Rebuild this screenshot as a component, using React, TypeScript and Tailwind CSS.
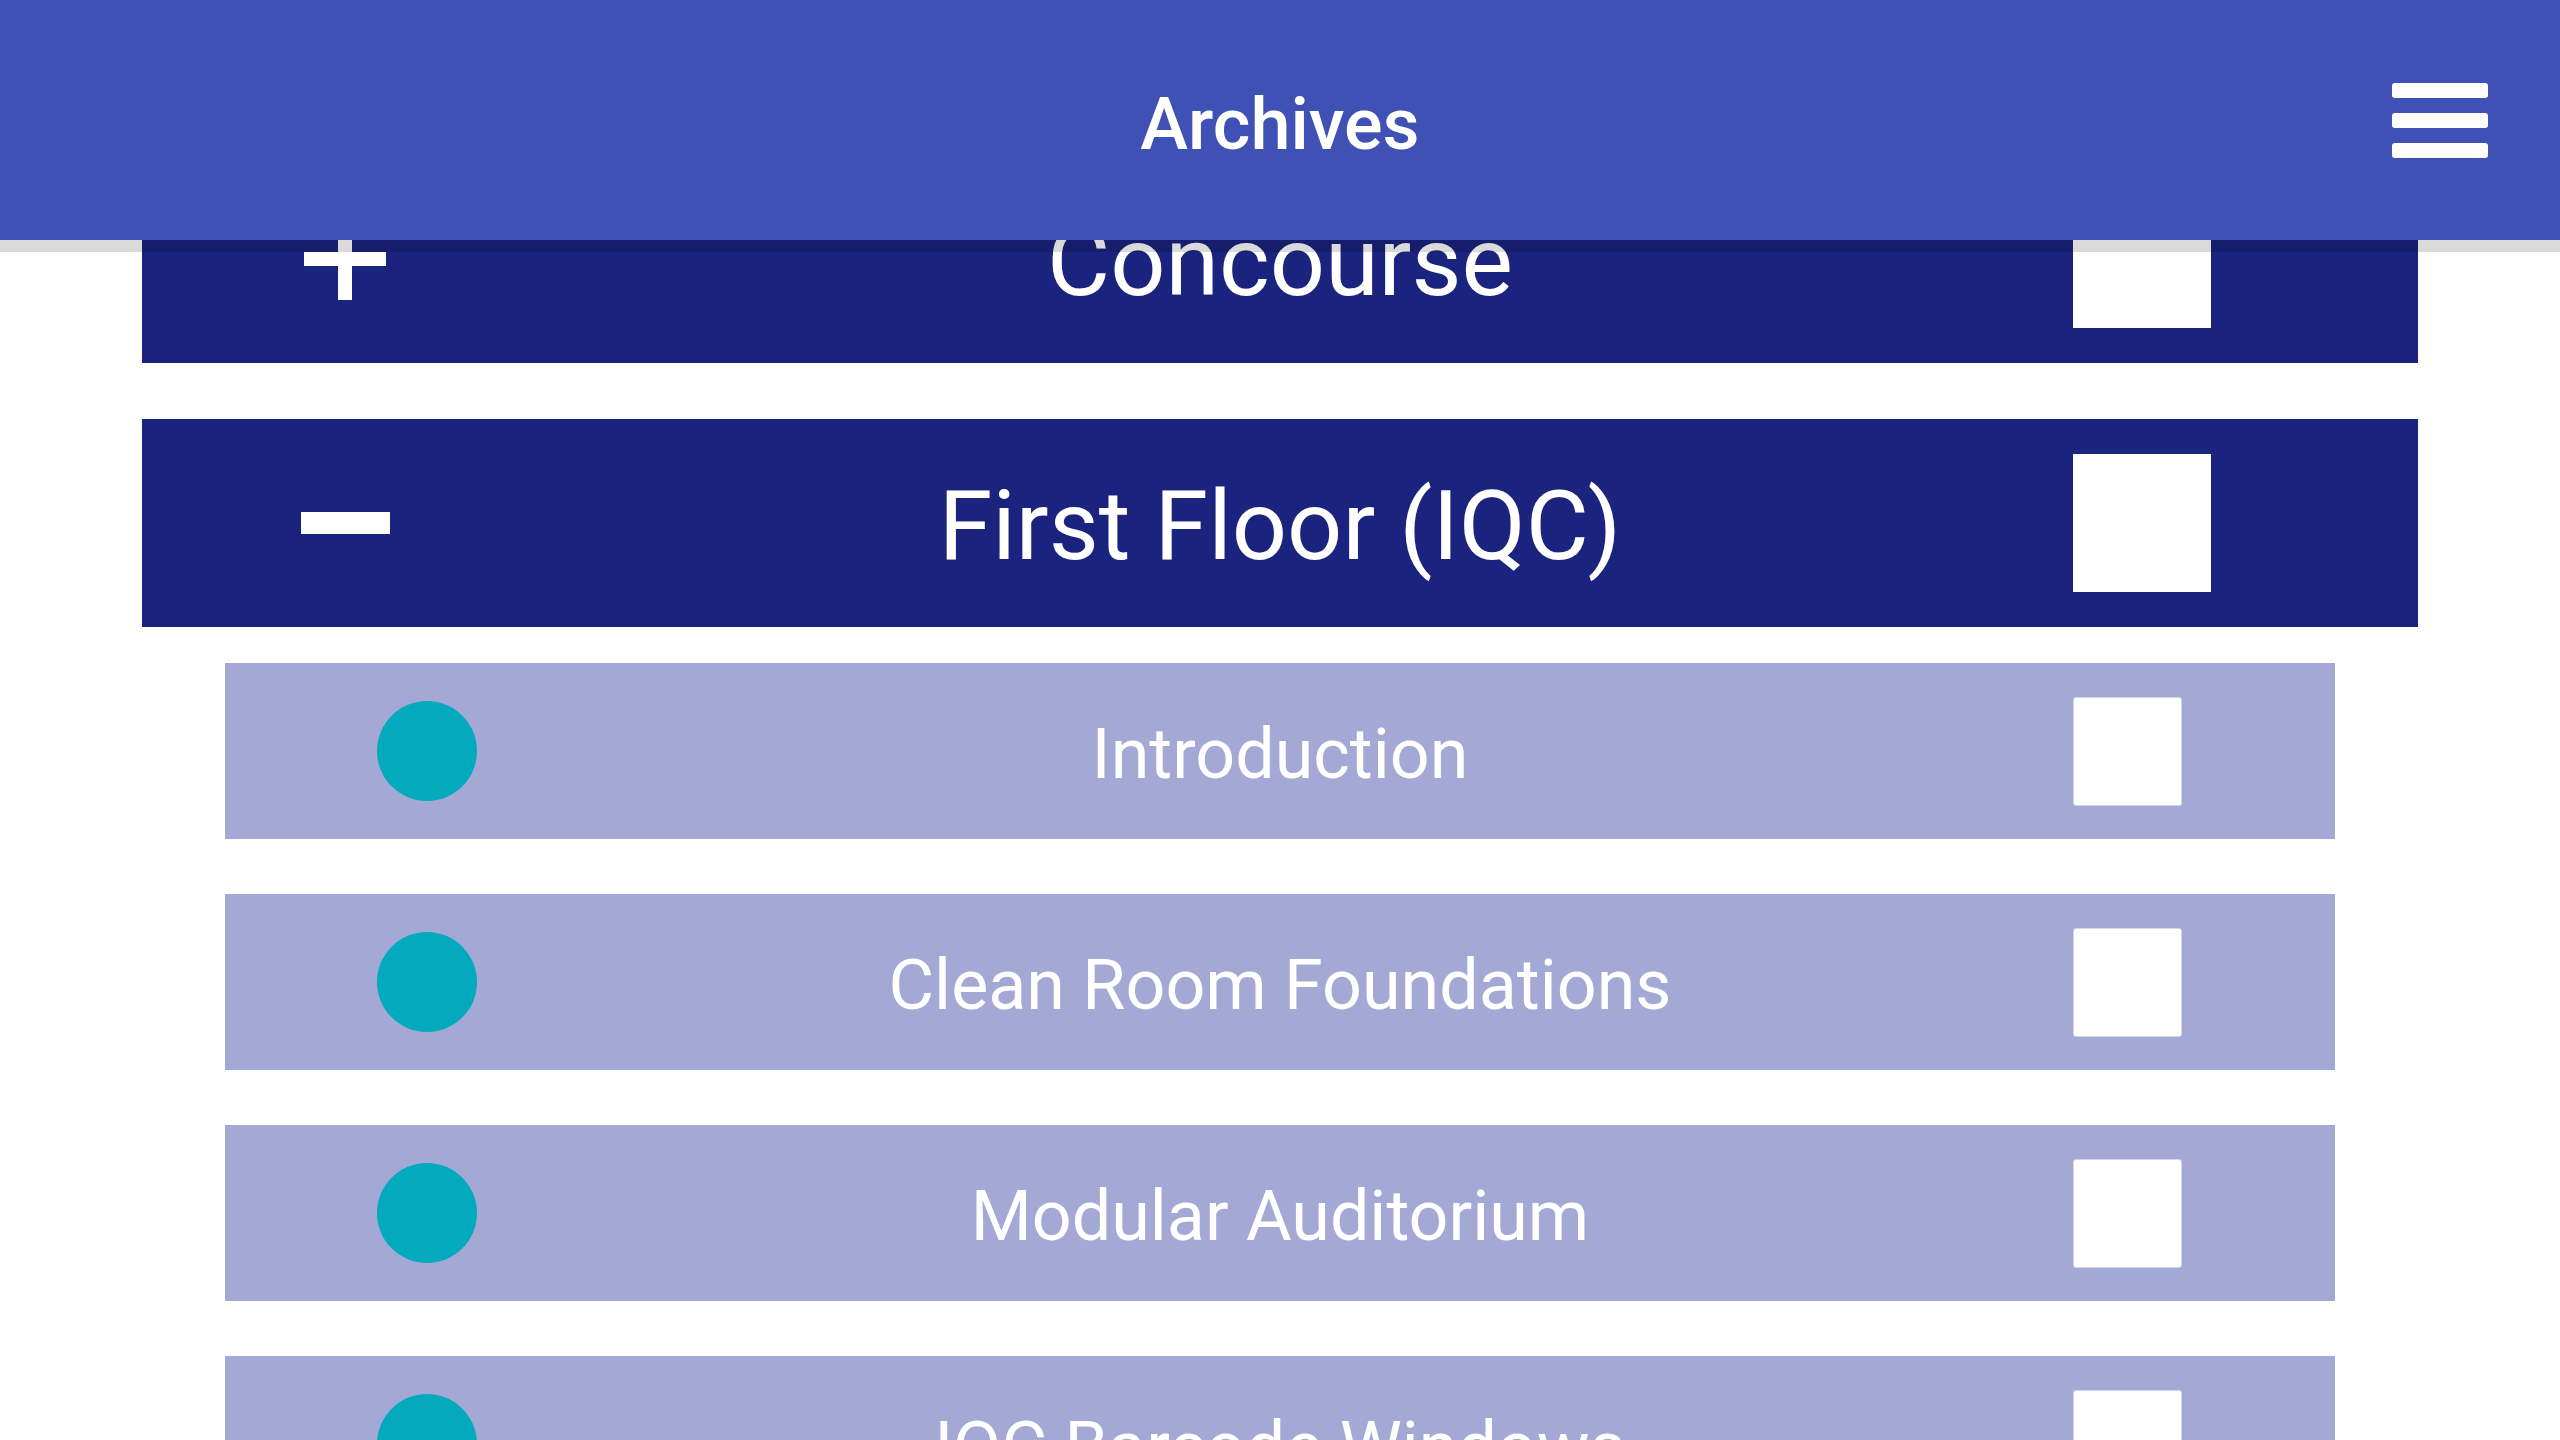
import React from "react";

const font = { fontFamily: "Roboto, 'Noto Sans', Arial, sans-serif" };

function PlusIcon() {
  return (
    <svg width="82" height="82" viewBox="0 0 82 82">
      <rect x="0" y="34" width="82" height="14" fill="#ffffff" />
      <rect x="34" y="0" width="14" height="82" fill="#ffffff" />
    </svg>
  );
}

function MinusIcon() {
  return (
    <svg width="89" height="22" viewBox="0 0 89 22">
      <rect x="0" y="0" width="89" height="22" fill="#ffffff" />
    </svg>
  );
}

function Section({ title, open }: { title: string; open: boolean }) {
  return (
    <div className="flex h-[208px] w-full items-center bg-[#1a237e]">
      <div className="flex w-[345px] shrink-0 items-center pl-[158px]">
        <div className="flex h-[90px] w-[90px] items-center justify-center">
          {open ? <MinusIcon /> : <PlusIcon />}
        </div>
      </div>
      <div className="flex-1 pt-[8px] text-center text-[97px] text-white whitespace-nowrap">
        {title}
      </div>
      <div className="flex w-[345px] shrink-0 items-center justify-end pr-[207px]">
        <div className="h-[138px] w-[138px] bg-white" />
      </div>
    </div>
  );
}

function Item({ title }: { title: string }) {
  return (
    <div className="flex h-[176px] w-full shrink-0 items-center bg-[#a3a8d5]">
      <div className="flex w-[262px] shrink-0 items-center pl-[152px]">
        <div className="h-[100px] w-[100px] rounded-full bg-[#03a9bd]" />
      </div>
      <div className="flex-1 pt-[6px] text-center text-[70px] text-white whitespace-nowrap">
        {title}
      </div>
      <div className="flex w-[262px] shrink-0 items-center justify-end pr-[153px]">
        <div className="h-[109px] w-[109px] rounded-[3px] border border-[#d3d5ec] bg-white" />
      </div>
    </div>
  );
}

export default function App() {
  return (
    <div className="relative h-screen w-full overflow-hidden bg-white" style={font}>
      <header className="absolute inset-x-0 top-0 z-10 grid h-[240px] grid-cols-[1fr_auto_1fr] items-center bg-[#3f51b5] shadow-[0_12px_0_rgba(0,0,0,0.145)]">
        <div />
        <div className="pt-[10px] text-[72px] font-medium text-white">Archives</div>
        <div className="flex justify-end pr-[72px]">
          <div className="flex flex-col gap-[15px]">
            <div className="h-[15px] w-[96px] rounded-[3px] bg-white" />
            <div className="h-[15px] w-[96px] rounded-[3px] bg-white" />
            <div className="h-[15px] w-[96px] rounded-[3px] bg-white" />
          </div>
        </div>
      </header>

      <main className="flex flex-col px-[142px] pt-[155px]">
        <Section title="Concourse" open={false} />
        <div className="mt-[56px]">
          <Section title="First Floor (IQC)" open={true} />
        </div>
        <div className="mt-[36px] flex flex-col gap-[55px] px-[83px]">
          <Item title="Introduction" />
          <Item title="Clean Room Foundations" />
          <Item title="Modular Auditorium" />
          <Item title="IQC Barcode Windows" />
        </div>
      </main>
    </div>
  );
}
